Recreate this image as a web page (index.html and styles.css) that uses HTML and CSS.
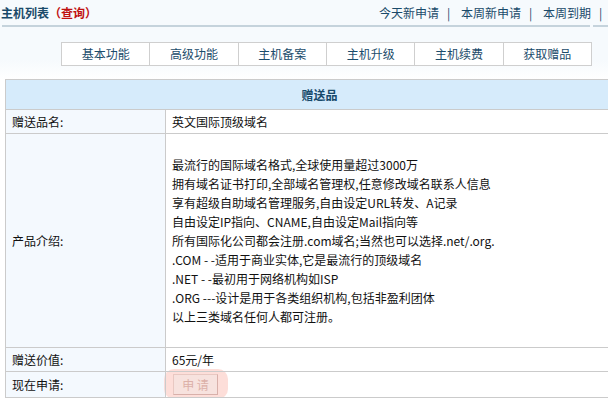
FILE: index.html
```html
<!DOCTYPE html>
<html lang="zh-CN">

<head>
    <meta charset="UTF-8">
    <title>主机列表</title>
    <link rel="stylesheet" href="styles.css">
</head>

<body>
    <div class="page">
        <!-- Title bar -->
        <div class="title-bar">
            <h2 class="title">主机列表<span class="query">（查询）</span></h2>
            <div class="links">
                <a href="#">今天新申请</a><span class="sep">|</span>
                <a href="#">本周新申请</a><span class="sep">|</span>
                <a href="#">本周到期</a><span class="sep">|</span>
                <a href="#">本月到期</a>
            </div>
        </div>
        <div class="rule"><span class="rule-main"></span><span class="rule-side"></span></div>

        <!-- Tabs -->
        <div class="tabs">
            <a href="#">基本功能</a>
            <a href="#">高级功能</a>
            <a href="#">主机备案</a>
            <a href="#">主机升级</a>
            <a href="#">主机续费</a>
            <a href="#">获取赠品</a>
        </div>

        <!-- Gift table -->
        <table class="gift">
            <tr>
                <th colspan="2">赠送品</th>
            </tr>
            <tr>
                <td class="label">赠送品名:</td>
                <td>英文国际顶级域名</td>
            </tr>
            <tr>
                <td class="label">产品介绍:</td>
                <td class="intro">
                    最流行的国际域名格式,全球使用量超过3000万<br>
                    拥有域名证书打印,全部域名管理权,任意修改域名联系人信息<br>
                    享有超级自助域名管理服务,自由设定URL转发、A记录<br>
                    自由设定IP指向、CNAME,自由设定Mail指向等<br>
                    所有国际化公司都会注册.com域名;当然也可以选择.net/.org.<br>
                    .COM - -适用于商业实体,它是最流行的顶级域名<br>
                    .NET - -最初用于网络机构如ISP<br>
                    .ORG ---设计是用于各类组织机构,包括非盈利团体<br>
                    以上三类域名任何人都可注册。
                </td>
            </tr>
            <tr>
                <td class="label">赠送价值:</td>
                <td>65元/年</td>
            </tr>
            <tr>
                <td class="label">现在申请:</td>
                <td class="apply"><span class="glow"><button disabled>申 请</button></span></td>
            </tr>
        </table>
    </div>
</body>

</html>
```

FILE: styles.css
```css
body {
    margin: 0;
    padding: 0;
    overflow: hidden;
    background: #fff;
    font-family: "Noto Sans CJK SC", "DejaVu Sans", sans-serif;
    font-size: 12px;
    color: #111;
}

a {
    text-decoration: none;
}

.page {
    width: 661px;
    background: linear-gradient(#f6fafd, #f6fafd 60px, #fff 80px);
}

.title-bar {
    display: flex;
    justify-content: space-between;
    align-items: center;
    height: 25px;
    padding-left: 1px;
}

.title {
    margin: 0;
    font-size: 12px;
    font-weight: bold;
    color: #1a4a6a;
    line-height: 18px;
}

.title .query {
    color: #c01010;
}

.links {
    line-height: 18px;
}

.links a {
    color: #1a4a6a;
}

.links .sep {
    padding: 0 8px;
    color: #1a4a6a;
}

.rule {
    display: flex;
    height: 2px;
}

.rule-main {
    margin-left: 2px;
    width: 588px;
    background: #c5d3dc;
}

.rule-side {
    margin-left: 3px;
    flex: 1;
    background: #c5d3dc;
}

.tabs {
    display: flex;
    margin: 15px 0 0 61px;
    width: 529px;
    border: 1px solid #cfcfcf;
    background: #fff;
}

.tabs a {
    width: 88px;
    height: 22px;
    line-height: 22px;
    text-align: center;
    color: #1b4c6b;
    border-left: 1px solid #cfcfcf;
}

.tabs a:first-child {
    border-left: none;
}

.gift {
    margin: 13px 0 0 5px;
    width: 635px;
    border-collapse: collapse;
    background: #fff;
}

.gift th,
.gift td {
    border: 1px solid #cbcbcb;
    padding: 0 6px;
    height: 23px;
    text-align: left;
}

.gift th {
    height: 29px;
    background: #d6ebfb;
    color: #174a6b;
    font-weight: bold;
    text-align: center;
    padding-right: 12px;
}

.gift td.label {
    width: 147px;
    background: #f4f9fe;
    color: #111;
}

.gift td.intro {
    padding-top: 21px;
    padding-bottom: 21px;
    line-height: 19px;
}

.gift td.apply {
    height: 25px;
    padding: 0;
}

.glow {
    display: block;
    width: 45px;
    margin: -4px 0 -3px -2px;
    padding: 5px 10px 4px 9px;
    border-radius: 10px;
    background: rgba(252, 190, 180, 0.5);
}

.glow button {
    display: block;
    width: 45px;
    height: 21px;
    padding: 0;
    font-family: inherit;
    font-size: 12px;
    color: #dcb0a8;
    background: #f7e2de;
    border: 1px solid #e8c8c2;
    border-right-color: #d8b0aa;
    border-bottom-color: #d8b0aa;
}
```
